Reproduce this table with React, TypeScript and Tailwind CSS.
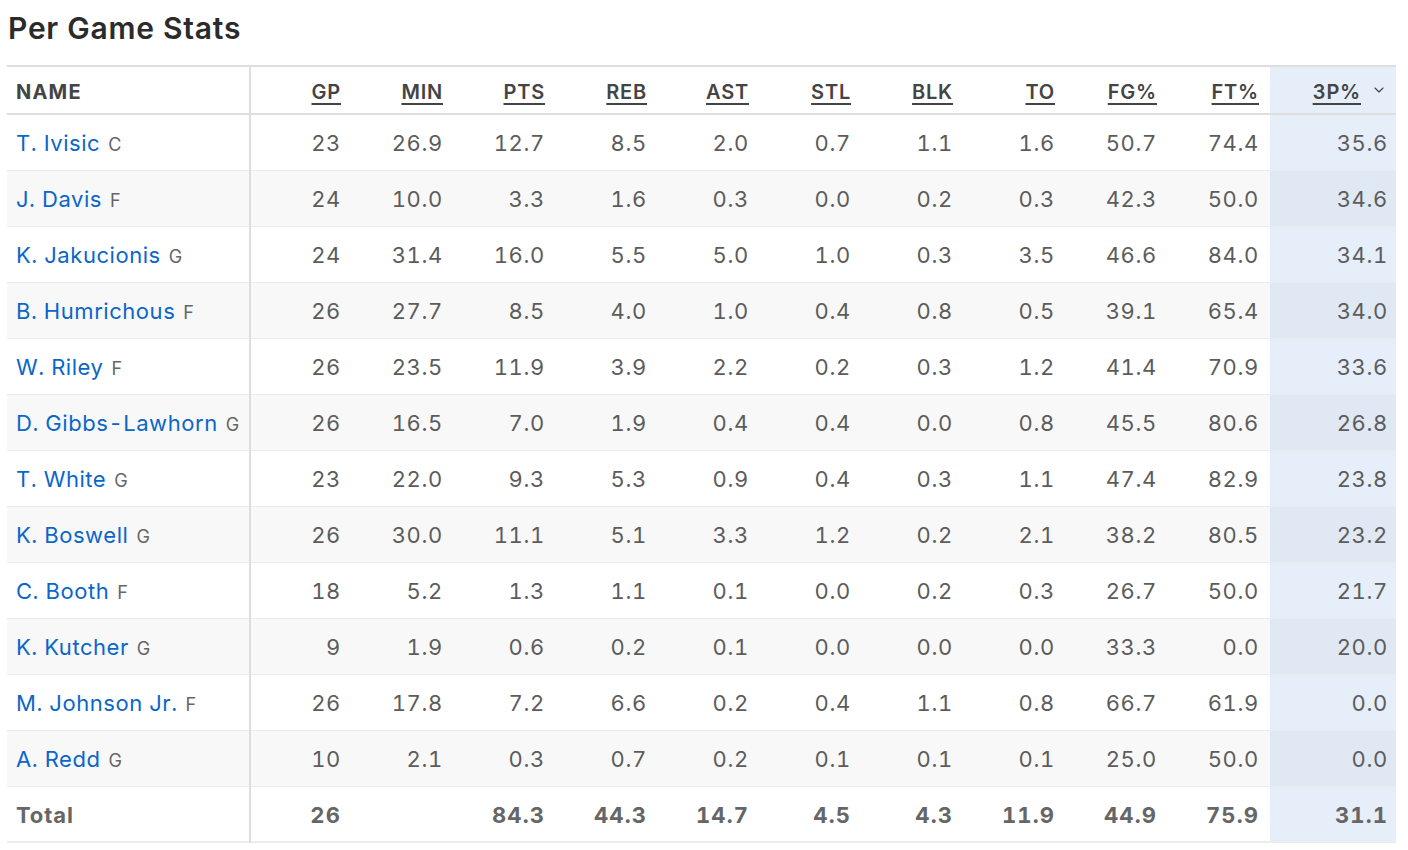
import { ChevronDown } from "lucide-react";

type Row = { name: string; pos: string; s: string[] };

const cols = ["GP", "MIN", "PTS", "REB", "AST", "STL", "BLK", "TO", "FG%", "FT%", "3P%"];

const rows: Row[] = [
  { name: "T. Ivisic", pos: "C", s: ["23", "26.9", "12.7", "8.5", "2.0", "0.7", "1.1", "1.6", "50.7", "74.4", "35.6"] },
  { name: "J. Davis", pos: "F", s: ["24", "10.0", "3.3", "1.6", "0.3", "0.0", "0.2", "0.3", "42.3", "50.0", "34.6"] },
  { name: "K. Jakucionis", pos: "G", s: ["24", "31.4", "16.0", "5.5", "5.0", "1.0", "0.3", "3.5", "46.6", "84.0", "34.1"] },
  { name: "B. Humrichous", pos: "F", s: ["26", "27.7", "8.5", "4.0", "1.0", "0.4", "0.8", "0.5", "39.1", "65.4", "34.0"] },
  { name: "W. Riley", pos: "F", s: ["26", "23.5", "11.9", "3.9", "2.2", "0.2", "0.3", "1.2", "41.4", "70.9", "33.6"] },
  { name: "D. Gibbs-Lawhorn", pos: "G", s: ["26", "16.5", "7.0", "1.9", "0.4", "0.4", "0.0", "0.8", "45.5", "80.6", "26.8"] },
  { name: "T. White", pos: "G", s: ["23", "22.0", "9.3", "5.3", "0.9", "0.4", "0.3", "1.1", "47.4", "82.9", "23.8"] },
  { name: "K. Boswell", pos: "G", s: ["26", "30.0", "11.1", "5.1", "3.3", "1.2", "0.2", "2.1", "38.2", "80.5", "23.2"] },
  { name: "C. Booth", pos: "F", s: ["18", "5.2", "1.3", "1.1", "0.1", "0.0", "0.2", "0.3", "26.7", "50.0", "21.7"] },
  { name: "K. Kutcher", pos: "G", s: ["9", "1.9", "0.6", "0.2", "0.1", "0.0", "0.0", "0.0", "33.3", "0.0", "20.0"] },
  { name: "M. Johnson Jr.", pos: "F", s: ["26", "17.8", "7.2", "6.6", "0.2", "0.4", "1.1", "0.8", "66.7", "61.9", "0.0"] },
  { name: "A. Redd", pos: "G", s: ["10", "2.1", "0.3", "0.7", "0.2", "0.1", "0.1", "0.1", "25.0", "50.0", "0.0"] },
];

const totals = ["26", "", "84.3", "44.3", "14.7", "4.5", "4.3", "11.9", "44.9", "75.9", "31.1"];

export default function App() {
  return (
    <div className="bg-white min-h-screen pl-[7px] pr-3 pt-[10px] font-['Inter','Liberation_Sans',sans-serif]">
      <h2 className="pl-px text-[30px] leading-9 font-semibold text-[#2b2b2b] tracking-[0.025em]">
        Per Game Stats
      </h2>

      <table className="mt-[19px] w-[1389px] table-fixed border-collapse tabular-nums">
        <colgroup>
          <col className="w-[243px]" />
          {cols.slice(0, 10).map((c) => (
            <col key={c} className="w-[102px]" />
          ))}
          <col className="w-[126px]" />
        </colgroup>
        <thead>
          <tr className="h-[48px] border-t-2 border-b-2 border-[#dedede]">
            <th className="border-r-2 border-[#dedede] pl-[9px] pt-[3px] text-left text-[20px] font-bold tracking-[0.06em] text-[#444]">
              NAME
            </th>
            {cols.map((c, i) => (
              <th
                key={c}
                className={
                  i === 10
                    ? "bg-[#e5eef9] pr-[9px] pt-[3px] text-right text-[20px] font-semibold tracking-[0.04em] text-[#444]"
                    : "pr-[11px] pt-[3px] text-right text-[20px] font-semibold tracking-[0.04em] text-[#444]"
                }
              >
                <span className="underline underline-offset-[4px] decoration-[1.5px]">{c}</span>
                {i === 10 && <ChevronDown className="ml-[10px] inline-block h-[16px] w-[16px] -translate-y-[3px] text-[#444]" strokeWidth={1.75} />}
              </th>
            ))}
          </tr>
        </thead>
        <tbody>
          {rows.map((r, ri) => (
            <tr key={r.name} className={`h-[56px] border-b border-[#ececec] ${ri % 2 === 1 ? "bg-[#f8f8f8]" : "bg-white"}`}>
              <td className="border-r-2 border-[#dedede] pl-[9px] pt-[3px] whitespace-nowrap">
                <span className="text-[22px] text-[#0b66c9] tracking-[0.025em]">{r.name}</span>
                <span className="ml-[8px] text-[18px] text-[#666]">{r.pos}</span>
              </td>
              {r.s.map((v, i) => (
                <td
                  key={i}
                  className={
                    i === 10
                      ? `pr-[8px] pt-[3px] text-right text-[22px] tracking-[0.03em] text-[#5c5c5c] ${ri % 2 === 1 ? "bg-[#dfe8f3]" : "bg-[#e5eef9]"}`
                      : "pr-[11px] pt-[3px] text-right text-[22px] tracking-[0.03em] text-[#5c5c5c]"
                  }
                >
                  {v}
                </td>
              ))}
            </tr>
          ))}
          <tr className="h-[56px] border-b-2 border-[#ececec] bg-white">
            <td className="border-r-2 border-[#dedede] pl-[9px] pt-[3px] text-[22px] font-bold tracking-[0.04em] text-[#666]">Total</td>
            {totals.map((v, i) => (
              <td
                key={i}
                className={
                  i === 10
                    ? "bg-[#e5eef9] pr-[8px] pt-[3px] text-right text-[22px] font-bold tracking-[0.05em] text-[#666]"
                    : "pr-[11px] pt-[3px] text-right text-[22px] font-bold tracking-[0.05em] text-[#666]"
                }
              >
                {v}
              </td>
            ))}
          </tr>
        </tbody>
      </table>
    </div>
  );
}
